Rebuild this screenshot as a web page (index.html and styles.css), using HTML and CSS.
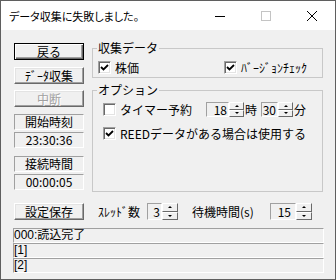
FILE: index.html
```html
<!DOCTYPE html>
<html lang="ja">
<head>
    <meta charset="UTF-8">
    <title>データ収集に失敗しました。</title>
    <link rel="stylesheet" href="styles.css">
</head>
<body>
    <div class="window">
        <div class="titlebar">
            <span class="title">データ収集に失敗しました。</span>
            <div class="caption-buttons">
                <span class="cap"><svg width="10" height="10"><line x1="0" y1="5.5" x2="10" y2="5.5"/></svg></span>
                <span class="cap cap-max"><svg width="10" height="10"><rect x="0.5" y="0.5" width="9" height="9"/></svg></span>
                <span class="cap"><svg width="10" height="10"><line x1="0" y1="0" x2="10" y2="10"/><line x1="10" y1="0" x2="0" y2="10"/></svg></span>
            </div>
        </div>

        <div class="client">
            <div class="main">
                <div class="side">
                    <button class="btn btn-default">戻る</button>
                    <button class="btn btn-collect">ﾃﾞｰﾀ収集</button>
                    <button class="btn" disabled>中断</button>
                    <div class="stat stat-label">開始時刻</div>
                    <div class="stat stat-value">23:30:36</div>
                    <div class="stat stat-label">接続時間</div>
                    <div class="stat stat-value">00:00:05</div>
                </div>

                <div class="groups">
                    <fieldset class="group group-data">
                        <legend>収集データ</legend>
                        <div class="row">
                            <label class="check check-stock"><span class="box"><svg width="9" height="9"><polyline points="1,4 3.5,6.5 8,2"/></svg></span>株価</label>
                            <label class="check"><span class="box"><svg width="9" height="9"><polyline points="1,4 3.5,6.5 8,2"/></svg></span>ﾊﾞｰｼﾞｮﾝﾁｪｯｸ</label>
                        </div>
                    </fieldset>

                    <fieldset class="group group-option">
                        <legend>オプション</legend>
                        <div class="row">
                            <label class="check check-timer"><span class="box"></span>タイマー予約</label>
                            <span class="spin"><span class="field w-hour">18</span><span class="updown"><span class="up"></span><span class="down"></span></span></span>
                            <span class="unit">時</span>
                            <span class="spin spin-min"><span class="field w-min">30</span><span class="updown"><span class="up"></span><span class="down"></span></span></span>
                            <span class="unit">分</span>
                        </div>
                        <div class="row row-reed">
                            <label class="check"><span class="box"><svg width="9" height="9"><polyline points="1,4 3.5,6.5 8,2"/></svg></span>REEDデータがある場合は使用する</label>
                        </div>
                    </fieldset>
                </div>
            </div>

            <div class="toolbar">
                <button class="btn btn-save">設定保存</button>
                <span class="lbl lbl-threads">ｽﾚｯﾄﾞ数</span>
                <span class="spin"><span class="field w-threads">3</span><span class="updown"><span class="up"></span><span class="down"></span></span></span>
                <span class="lbl lbl-wait">待機時間(s)</span>
                <span class="spin"><span class="field w-wait">15</span><span class="updown"><span class="up"></span><span class="down"></span></span></span>
            </div>

            <div class="log">
                <div class="log-line">000:読込完了</div>
                <div class="log-line">[1]</div>
                <div class="log-line">[2]</div>
            </div>
        </div>
    </div>
</body>
</html>
```

FILE: styles.css
```css
* {
    box-sizing: border-box;
}
body {
    margin: 0;
    font-family: "Noto Sans CJK JP", sans-serif;
    font-size: 12px;
    color: #000;
}
.window {
    width: 336px;
    height: 280px;
    border: 1px solid #5f5f5f;
    background-color: #f0f0f0;
    display: flex;
    flex-direction: column;
}

/* title bar */
.titlebar {
    height: 29px;
    flex-shrink: 0;
    background-color: #fff;
    display: flex;
    align-items: center;
}
.title {
    flex: 1;
    padding-left: 8px;
    font-size: 11px;
    font-feature-settings: "palt";
}
.caption-buttons {
    display: flex;
    height: 100%;
}
.cap {
    width: 46px;
    display: flex;
    align-items: center;
    justify-content: center;
}
.cap svg {
    stroke: #000;
    stroke-width: 1;
    fill: none;
}
.cap-max svg {
    stroke: #c4c4c4;
}

/* client area */
.client {
    flex: 1;
    padding: 11px 0 0 12px;
}
.main {
    display: flex;
    align-items: flex-start;
}
.side {
    width: 70px;
    margin: 2px 0 0 1px;
}
.btn {
    display: block;
    width: 70px;
    height: 17px;
    padding: 0;
    margin: 0 0 7px;
    font: inherit;
    line-height: 15px;
    color: #000;
    background-color: #f0f0f0;
    border: 1px solid;
    border-color: #fff #696969 #696969 #fff;
    box-shadow: inset -1px -1px #a0a0a0, inset 1px 1px #e3e3e3;
}
.btn-default {
    border-color: #000;
    box-shadow: inset 1px 1px #fff, inset -1px -1px #696969, inset -2px -2px #a0a0a0;
}
.btn-collect {
    margin-bottom: 6px;
}
.btn:disabled {
    color: #a0a0a0;
    text-shadow: 1px 1px #fff;
}
.stat {
    height: 16px;
    border: 1px solid;
    border-color: #a0a0a0 #fff #fff #a0a0a0;
    text-align: center;
    line-height: 14px;
}
.stat-label {
    margin-bottom: 2px;
}
.stat-value {
    margin-bottom: 8px;
}

/* group boxes */
.groups {
    width: 231px;
    margin-left: 8px;
}
.group {
    margin: 0;
    padding: 0 0 0 4px;
    border: 1px solid #c8c8c8;
}
.group legend {
    padding: 0 1px;
    line-height: 14px;
}
.group-data {
    padding-top: 6px;
    padding-bottom: 3px;
}
.group-data .row {
    padding-left: 1px;
}
.group-option {
    margin-top: 5px;
    padding-top: 5px;
    padding-bottom: 50px;
}
.group-option .row {
    padding-left: 6px;
}
.row {
    display: flex;
    align-items: center;
    height: 13px;
}
.group-option .row {
    height: 15px;
}
.row-reed {
    margin-top: 9px;
}
.check {
    display: flex;
    align-items: center;
    gap: 4px;
    white-space: nowrap;
}
.check-stock {
    width: 126px;
}
.check-timer {
    width: 103px;
}
.box {
    width: 13px;
    height: 13px;
    flex-shrink: 0;
    background-color: #fff;
    border: 1px solid;
    border-color: #a0a0a0 #fff #fff #a0a0a0;
    box-shadow: inset 1px 1px #696969, inset -1px -1px #e3e3e3;
    display: flex;
    align-items: center;
    justify-content: center;
}
.box svg {
    fill: none;
    stroke: #000;
    stroke-width: 1.8;
}

/* spin boxes */
.spin {
    display: flex;
    height: 15px;
}
.field {
    height: 100%;
    border: 1px solid;
    border-color: #a0a0a0 #fff #fff #a0a0a0;
    text-align: right;
    padding-right: 1px;
    line-height: 13px;
}
.w-hour {
    width: 23px;
}
.w-min {
    width: 17px;
}
.w-threads {
    width: 15px;
}
.w-wait {
    width: 26px;
    padding-right: 4px;
}
.updown {
    width: 15px;
    display: flex;
    flex-direction: column;
}
.updown span {
    flex: 1;
    border: 1px solid;
    border-color: #fff #696969 #696969 #fff;
    display: flex;
    align-items: center;
    justify-content: center;
}
.updown span::before {
    content: "";
    border: 2px solid transparent;
}
.updown .up::before {
    border-width: 0 2px 2px;
    border-bottom-color: #000;
}
.updown .down::before {
    border-width: 2px 2px 0;
    border-top-color: #000;
}
.unit {
    margin-left: 1px;
}
.spin-min {
    margin-left: 4px;
}

/* bottom settings row */
.toolbar {
    display: flex;
    align-items: center;
    margin-top: 5px;
    padding-left: 1px;
}
.toolbar .btn {
    margin: 0;
}
.toolbar .spin {
    height: 17px;
}
.toolbar .field {
    line-height: 15px;
}
.toolbar .updown {
    width: 16px;
}
.lbl-threads {
    margin-left: 14px;
    width: 49px;
}
.lbl-wait {
    margin-left: 14px;
    width: 78px;
}

/* status log */
.log {
    margin-top: 8px;
    width: 311px;
}
.log-line {
    height: 15px;
    border: 1px solid;
    border-color: #a0a0a0 #fff #fff #a0a0a0;
    font-family: "Liberation Sans", "Noto Sans CJK JP", sans-serif;
    line-height: 13px;
    white-space: nowrap;
    overflow: hidden;
}
```
